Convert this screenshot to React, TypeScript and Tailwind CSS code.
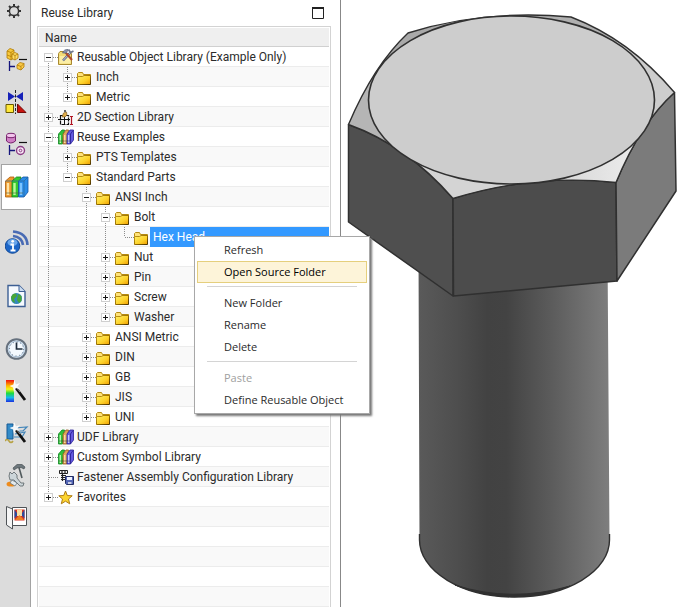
import React from "react";

type IconKind = "folder" | "tools" | "section" | "books" | "fastener" | "star";

type Row = {
  label: string;
  icon: IconKind;
  // One flag per ancestor column: whether its guide line continues through this row.
  guides: boolean[];
  toggle: "plus" | "minus" | "none";
  last?: boolean;
  first?: boolean;
  selected?: boolean;
};

const rows: Row[] = [
  { label: "Reusable Object Library (Example Only)", icon: "tools", guides: [], toggle: "minus", first: true },
  { label: "Inch", icon: "folder", guides: [true], toggle: "plus" },
  { label: "Metric", icon: "folder", guides: [true], toggle: "plus", last: true },
  { label: "2D Section Library", icon: "section", guides: [], toggle: "plus" },
  { label: "Reuse Examples", icon: "books", guides: [], toggle: "minus" },
  { label: "PTS Templates", icon: "folder", guides: [true], toggle: "plus" },
  { label: "Standard Parts", icon: "folder", guides: [true], toggle: "minus", last: true },
  { label: "ANSI Inch", icon: "folder", guides: [true, false], toggle: "minus" },
  { label: "Bolt", icon: "folder", guides: [true, false, true], toggle: "minus" },
  { label: "Hex Head", icon: "folder", guides: [true, false, true, true], toggle: "none", last: true, selected: true },
  { label: "Nut", icon: "folder", guides: [true, false, true], toggle: "plus" },
  { label: "Pin", icon: "folder", guides: [true, false, true], toggle: "plus" },
  { label: "Screw", icon: "folder", guides: [true, false, true], toggle: "plus" },
  { label: "Washer", icon: "folder", guides: [true, false, true], toggle: "plus", last: true },
  { label: "ANSI Metric", icon: "folder", guides: [true, false], toggle: "plus" },
  { label: "DIN", icon: "folder", guides: [true, false], toggle: "plus" },
  { label: "GB", icon: "folder", guides: [true, false], toggle: "plus" },
  { label: "JIS", icon: "folder", guides: [true, false], toggle: "plus" },
  { label: "UNI", icon: "folder", guides: [true, false], toggle: "plus", last: true },
  { label: "UDF Library", icon: "books", guides: [], toggle: "plus" },
  { label: "Custom Symbol Library", icon: "books", guides: [], toggle: "plus" },
  { label: "Fastener Assembly Configuration Library", icon: "fastener", guides: [], toggle: "none" },
  { label: "Favorites", icon: "star", guides: [], toggle: "plus", last: true },
];

function Guide({ on }: { on: boolean }) {
  return (
    <svg width="19" height="20" className="shrink-0" aria-hidden="true">
      {on && <path d="M9.5 0V20" stroke="#8c8c8c" strokeDasharray="1 1" />}
    </svg>
  );
}

function Toggle({ row }: { row: Row }) {
  const art = (
    <svg width="19" height="20" className="block" aria-hidden="true">
      {!row.first && <path d="M9.5 0V10" stroke="#8c8c8c" strokeDasharray="1 1" />}
      {!row.last && <path d="M9.5 10V20" stroke="#8c8c8c" strokeDasharray="1 1" />}
      <path d="M10 10.5H19" stroke="#8c8c8c" strokeDasharray="1 1" />
      {row.toggle !== "none" && (
        <>
          <rect x="5.5" y="6.5" width="8" height="8" fill="#fff" stroke="#cfcfcf" />
          <path d="M7 10.5H12" stroke="#1a1a1a" />
          {row.toggle === "plus" && <path d="M9.5 8V13" stroke="#1a1a1a" />}
        </>
      )}
    </svg>
  );
  if (row.toggle === "none") return <span className="shrink-0">{art}</span>;
  return (
    <button
      type="button"
      className="shrink-0"
      aria-label={(row.toggle === "plus" ? "Expand " : "Collapse ") + row.label}
    >
      {art}
    </button>
  );
}

function RowIcon({ kind }: { kind: IconKind }) {
  return (
    <svg width="16" height="20" viewBox="0 0 16 20" className="shrink-0" aria-hidden="true">
      {kind === "folder" && (
        <>
          <path d="M.5 16.5V6.5L1.5 5.5H5.5L6.5 7.5H13.500V16.500Z" fill="#ffe27a" stroke="#b58a10" />
          <path d="M.5 17.500V9.500H5.500L7 8.500H13.500V17.500Z" fill="url(#folderFace)" stroke="url(#folderEdge)" />
        </>
      )}
      {kind === "tools" && (
        <>
          <path d="M.5 17.500V6.500L2 4.500H6L7 6.500H13.500V17.500Z" fill="#f3dc78" stroke="#a98a30" />
          <path d="M1.500 16.500V9H12.500V16.500Z" fill="#fbeea6" />
          <path d="M5 13.500L12 6" stroke="#5c6480" strokeWidth="2.400" />
          <path d="M5 13.500L12 6" stroke="#c3cae0" />
          <path d="M10.500 2.500L12.500 5.500L15.500 4" stroke="#70788c" strokeWidth="1.800" fill="none" />
          <path d="M8 6L14 13" stroke="#b0492c" strokeWidth="2" />
          <path d="M4.500 6Q6 2 10 2.500L8.500 6Z" fill="#8a93ad" stroke="#4d566f" strokeWidth=".6" />
        </>
      )}
      {kind === "section" && (
        <>
          <path d="M2.500 8.500V17.500H10.500V8.500Z" fill="none" stroke="#111" strokeWidth="1.200" strokeDasharray="4 1" />
          <path d="M0 12.500H12M6.500 9V18" fill="none" stroke="#111" />
          <path d="M4 10L5.500 6L8.500 5L9 8L7 10Z" fill="#e0ad4a" stroke="#765016" strokeWidth=".6" />
          <circle cx="7" cy="4" r="1" fill="#333" />
          <path d="M12 9.500H15M12 17.500H15M13.500 9V18" stroke="#b01422" strokeWidth="1.200" />
        </>
      )}
      {kind === "books" && (
        <>
          <path d="M.5 7L4 3H6.500L4.500 17H.5Z" fill="#2fc23a" stroke="#0c8420" strokeWidth=".8" />
          <path d="M5 7L8 3H10.500L9 17H5Z" fill="#e0a55c" stroke="#95581c" strokeWidth=".8" />
          <path d="M9 7L12 3H15.500V13L12.500 17H9Z" fill="#6459e0" stroke="#2a2296" strokeWidth=".8" />
          <path d="M12.500 17V7L15 3.500" fill="none" stroke="#241d8c" strokeWidth=".8" />
          <path d="M2.300 8V16" stroke="#b4f8ae" strokeWidth="1.400" />
          <path d="M6.700 8V16" stroke="#ffe0ab" strokeWidth="1.200" />
          <path d="M10.600 8V16" stroke="#c6c2ff" strokeWidth="1.400" />
          <path d="M1 14H12" stroke="#35402c" strokeWidth=".5" />
        </>
      )}
      {kind === "fastener" && (
        <>
          <path d="M1.500 3.500H9.500V6.500H1.500Z" fill="#eee" stroke="#1f1f1f" />
          <path d="M4 3V6M7 3V6M3 8.500H8M3 10.500H8M3 12.500H7M4.500 7V14" stroke="#222" strokeWidth="1.200" />
          <path d="M7.500 9.500H15.500V17.500H8.500L7.500 16.500Z" fill="#5265b4" stroke="#222c62" />
          <path d="M9 10H14V13H9Z" fill="#eef2ff" />
          <path d="M10 15H13.500V17H10Z" fill="#c8cde2" />
        </>
      )}
      {kind === "star" && (
        <path
          d="M7.500 4L9.300 8.500L14.200 8.800L10.500 12L11.700 16.800L7.500 14.200L3.300 16.800L4.500 12L.8 8.800L5.700 8.500Z"
          fill="#fcd42f"
          stroke="#b07d14"
        />
      )}
    </svg>
  );
}

function TreeRow({ row, odd }: { row: Row; odd: boolean }) {
  return (
    <li
      role="treeitem"
      aria-selected={!!row.selected}
      aria-level={row.guides.length + 1}
      className={
        "flex h-5 shrink-0 shadow-[inset_0_-1px_0_#ececec] " + (odd ? "bg-[#f9f9f9]" : "bg-white")
      }
    >
      {row.guides.map((on, i) => (
        <Guide key={i} on={on} />
      ))}
      <Toggle row={row} />
      <RowIcon kind={row.icon} />
      <span
        className={
          "flex-1 pl-[3px] leading-5 whitespace-nowrap " + (row.selected ? "bg-[#3399ff] text-white" : "")
        }
      >
        {row.label}
      </span>
    </li>
  );
}

function SideButton({ label, children }: { label: string; children: React.ReactNode }) {
  return (
    <button type="button" aria-label={label} className="flex h-[42px] w-[30px] items-center justify-end pt-0.5 pr-px">
      <svg width="24" height="26" viewBox="0 0 24 26" aria-hidden="true">
        {children}
      </svg>
    </button>
  );
}

function Wand() {
  return (
    <>
      <path d="M11 9L20 21" stroke="#111" strokeWidth="2.800" />
      <path d="M11.500 8.500L15 13" stroke="#888" strokeWidth="1" />
      <path d="M9.500 1L10.800 5.500L15 4L12.500 7.500L15 10L10.800 9L9 13L8 8.500L4.500 7L8.300 5.500Z" fill="#fff" opacity=".9" />
    </>
  );
}

function Sidebar() {
  return (
    <nav aria-label="Resource bar" className="flex w-[31px] shrink-0 flex-col border-r border-[#a3a3a3] bg-[#dcdcdc]">
      <button type="button" aria-label="Settings" className="flex h-[38px] items-start pt-[3px] pl-1.5">
        <svg width="16" height="16" viewBox="0 0 16 16" aria-hidden="true">
          <circle cx="8" cy="8" r="4.600" fill="none" stroke="#333" strokeWidth="1.500" />
          <path d="M8 1V3M8 13V15M1 8H3M13 8H15M3 3L4.600 4.600M11.400 11.400L13 13M13 3L11.400 4.600M3 13L4.600 11.400" stroke="#333" strokeWidth="2" />
        </svg>
      </button>
      <SideButton label="Assembly Navigator">
        <path d="M2 4L5 1.500L9 3V11L6 13L2 11Z" fill="#f8c93c" stroke="#b07c08" strokeWidth=".8" />
        <path d="M2 4L6 5.500L9 3M6 5.500V13M2 8L6 9.500L9 7" fill="none" stroke="#b07c08" strokeWidth=".8" />
        <path d="M7 7L10 5.500L13 7V11L10 13L7 11.500Z" fill="#ffdc66" stroke="#b07c08" strokeWidth=".8" />
        <path d="M7 7L10 8.500L13 7M10 8.500V13" fill="none" stroke="#b07c08" strokeWidth=".8" />
        <path d="M14 12.500H22" stroke="#111" strokeWidth="1.200" />
        <path d="M4.500 14V24M4.500 19.500H10" stroke="#15157c" strokeWidth="1.300" />
        <path d="M12 18L15 15.500L19 16.500V20L16 23L12 21.500Z" fill="#fbca48" stroke="#b07c08" strokeWidth=".8" />
        <path d="M12 18L16 19.500L19 16.500M16 19.500V23" fill="none" stroke="#b07c08" strokeWidth=".8" />
      </SideButton>
      <SideButton label="Constraint Navigator">
        <path d="M3 3L10 7.500L3 12ZM18 3L11 7.500L18 12Z" fill="#1722b8" />
        <path d="M10.500 1V25" stroke="#222" strokeDasharray="3 1.500" />
        <path d="M1 15.500H8.500V23.500H1Z" fill="#ffe83a" stroke="#6b5a00" />
        <path d="M12.500 15L21 23.500H12.500Z" fill="#c9130e" stroke="#6f0b08" />
      </SideButton>
      <SideButton label="Part Navigator">
        <path d="M1.500 4.500V10Q5.500 14 10.500 10V4.500Z" fill="#cf7fc5" stroke="#76226c" />
        <ellipse cx="6" cy="4.500" rx="4.500" ry="2.200" fill="#f2c4ec" stroke="#76226c" />
        <path d="M14 11.500H22" stroke="#111" strokeWidth="1.200" />
        <path d="M4.500 14V24M4.500 19.500H10" stroke="#15157c" strokeWidth="1.300" />
        <circle cx="15.500" cy="19.500" r="4" fill="#f5e4f3" stroke="#8c3d85" strokeWidth="1.400" />
        <circle cx="15.500" cy="19.500" r="1.300" fill="none" stroke="#8c3d85" />
      </SideButton>
      <button
        type="button"
        aria-label="Reuse Library"
        aria-pressed="true"
        className="-mr-px ml-px flex h-[46px] items-center border border-r-0 border-[#a3a3a3] bg-white pl-[3px]"
      >
        <svg width="24" height="24" viewBox="0 0 24 24" aria-hidden="true">
          <path d="M.5 6L5 2H9L7 22H.5Z" fill="#ee9a2d" stroke="#ac5d0c" strokeWidth=".8" />
          <path d="M7 6L11.500 2H16L13 22H7Z" fill="#37c92e" stroke="#18821a" strokeWidth=".8" />
          <path d="M13.500 6L18 2H23V17L19 22H13.500Z" fill="#2b8de8" stroke="#1254a5" strokeWidth=".8" />
          <path d="M19 22V6L23 2M.5 6H19" fill="none" stroke="#2b6795" strokeWidth=".7" />
          <path d="M3 8V20" stroke="#ffe2a4" strokeWidth="2.400" />
          <path d="M9.500 8V20" stroke="#b8fb9a" strokeWidth="2.400" />
          <path d="M16 8V20" stroke="#7cc4ff" strokeWidth="2.400" />
          <path d="M1 18H18" stroke="#4f5d3a" strokeWidth=".6" />
        </svg>
      </button>
      <div className="mt-2.5 flex flex-col gap-3">
        <SideButton label="HD3D Tools">
          <path d="M8 7Q17 8 18 16M8 2.500Q22 4 22.500 16" fill="none" stroke="#496bb4" strokeWidth="2.600" />
          <circle cx="7.500" cy="17" r="7.300" fill="#1c66c8" stroke="#164b96" />
          <ellipse cx="7.500" cy="13.500" rx="5" ry="3.500" fill="#68a5ea" />
          <path d="M5.500 15.500H8V21M5.500 21.500H10.500" stroke="#fff" strokeWidth="1.800" fill="none" />
          <circle cx="7.700" cy="12.300" r="1.400" fill="#fff" />
        </SideButton>
        <SideButton label="Internet Explorer">
          <path d="M3 2.500H14L20 8.500V23.500H3Z" fill="#f6faff" stroke="#3d5f94" strokeWidth="1.400" />
          <path d="M14 2.500V8.500H20" fill="#cbdcf0" stroke="#3d5f94" />
          <circle cx="11.500" cy="15.500" r="5.500" fill="#3487bd" />
          <path d="M8 11L11 10.500L12 13L9 16L10 20L7 18L6 14ZM13 11L16.500 13L16.500 18L14 20L12 17Z" fill="#46a637" />
        </SideButton>
        <SideButton label="History">
          <circle cx="11.500" cy="12" r="9.800" fill="#dcebf8" stroke="#66717e" strokeWidth="2" />
          <circle cx="11.500" cy="12" r="7.800" fill="#f3f9ff" stroke="#9fb9d2" strokeWidth=".8" />
          <path d="M11.500 5.500V12H17.500" stroke="#1f2d3d" strokeWidth="1.700" fill="none" />
          <circle cx="11.500" cy="12" r="7" fill="none" stroke="#44566b" strokeDasharray=".8 2.865" />
        </SideButton>
      </div>
      <SideButton label="Process Studio">
        <path d="M1 1H9V23H1Z" fill="url(#spectrum)" />
        <Wand />
      </SideButton>
      <SideButton label="Manufacturing Wizards">
        <path d="M2 3H8V18H2Z" fill="#338bc8" stroke="#175b95" />
        <path d="M9 7L22 6L18 10H11M10 13L20 11L17 16H9" fill="none" stroke="#4285b9" strokeWidth="1.200" />
        <path d="M0 20Q2 17 4 20T8 20" fill="none" stroke="#b7a244" strokeWidth="1.600" />
        <Wand />
      </SideButton>
      <SideButton label="Roles">
        <path d="M8 5L12 1.500H17L20 4L19 6L16 4.500L12 5L9 7Z" fill="#6d777c" stroke="#394246" strokeWidth=".6" />
        <path d="M14 4.500L17 15" stroke="#515a5d" strokeWidth="1.600" />
        <path d="M5 9L7 11L9 9L12 12L12 15L16 20H19L18 23H15L9 17H5L4 13Z" fill="#ccd5d9" stroke="#596266" strokeWidth=".8" />
        <ellipse cx="6" cy="21" rx="4.500" ry="2.600" fill="#ee8b1c" />
        <path d="M7 17L12 20L10 23L5 20Z" fill="#e4eaee" stroke="#62727d" strokeWidth=".7" />
      </SideButton>
      <SideButton label="System Scenes">
        <path d="M1.500 1.500L7.500 4V24L1.500 20Z" fill="#f5f5f5" stroke="#4f5357" />
        <path d="M7.500 2.500H21.500V20.500H7.500Z" fill="#fff" stroke="#4f5357" />
        <path d="M9.500 4.500H19.500V15.500H9.500Z" fill="#d63422" />
        <path d="M9.500 4.500L14.500 12L19.500 4.500V13.500L14.500 8L9.500 13.500Z" fill="#294b9f" />
        <path d="M12 4.500H17V11H12Z" fill="#f9dca4" />
        <path d="M10 15L14.500 10L19 15Z" fill="#ec8224" />
      </SideButton>
    </nav>
  );
}

function LibraryPanel() {
  return (
    <section aria-label="Reuse Library" className="flex w-[310px] shrink-0 flex-col border-r border-[#888] pr-[9px] pl-1.5">
      <header className="flex h-[26px] shrink-0 items-center justify-between pr-[7px] pl-1">
        <h1>Reuse Library</h1>
        <button type="button" aria-label="Maximize panel">
          <svg width="12" height="12" className="block" aria-hidden="true">
            <path d="M.5 1V11.500H11.500V1" fill="none" stroke="#222" />
            <path d="M0 1H12" stroke="#222" strokeWidth="2" />
          </svg>
        </button>
      </header>
      <div className="flex min-h-0 flex-1 flex-col border border-b-0 border-[#d3d3d3] p-px pb-0">
        <div className="h-[19px] shrink-0 border-b border-[#d0d0d0] bg-[#efefef] pl-1.5 leading-5">Name</div>
        <ul role="tree" aria-label="Libraries" className="flex flex-col">
          {rows.map((row, i) => (
            <TreeRow key={row.label} row={row} odd={i % 2 === 1} />
          ))}
        </ul>
        <div className="flex-1 bg-[repeating-linear-gradient(to_bottom,#f9f9f9_0_19px,#ececec_19px_20px,#fff_20px_39px,#ececec_39px_40px)]" />
      </div>
    </section>
  );
}

function MenuItem({ label, active, disabled }: { label: string; active?: boolean; disabled?: boolean }) {
  return (
    <button
      type="button"
      role="menuitem"
      disabled={disabled}
      className={
        "flex h-[22px] items-center border pl-[26px] text-left whitespace-nowrap " +
        (active ? "border-[#e5cf7d] bg-[#fdf4d9] text-black" : disabled ? "border-transparent text-[#a0a0a0]" : "border-transparent")
      }
    >
      {label}
    </button>
  );
}

function MenuRule() {
  return <hr className="mx-2.5 mt-[3px] mb-[5px] border-t border-[#d4d4d4]" />;
}

function ContextMenu() {
  return (
    <div
      role="menu"
      className="absolute top-[236px] left-[194px] flex w-[176px] flex-col border border-[#a8a8a8] bg-white p-0.5 font-['Open_Sans','Noto_Sans',sans-serif] text-[11px] shadow-[2px_2px_2px_#777]"
    >
      <MenuItem label="Refresh" />
      <MenuItem label="Open Source Folder" active />
      <MenuRule />
      <MenuItem label="New Folder" />
      <MenuItem label="Rename" />
      <MenuItem label="Delete" />
      <MenuRule />
      <MenuItem label="Paste" disabled />
      <MenuItem label="Define Reusable Object" />
    </div>
  );
}

function BoltView() {
  const top =
    "M348.500 124.500Q373.700 65.200 408 33Q484.500 9 571 17Q629.300 39.300 674.500 92.500Q640.800 122.500 616 182.500Q533.500 173.500 453 198.500Q407 145.500 348.500 124.500Z";
  return (
    <svg viewBox="341 0 344 607" preserveAspectRatio="xMinYMin meet" className="block h-full w-full" role="img" aria-label="Hex head bolt">
      <defs>
        <linearGradient id="folderFace" x1="0" y1="0" x2="1" y2="1">
          <stop offset="0" stopColor="#fff36a" />
          <stop offset=".6" stopColor="#fdd028" />
          <stop offset="1" stopColor="#ee9c00" />
        </linearGradient>
        <linearGradient id="folderEdge" x1="0" y1="0" x2="1" y2="1">
          <stop offset="0" stopColor="#c39a1c" />
          <stop offset=".5" stopColor="#9a7000" />
          <stop offset="1" stopColor="#4a3300" />
        </linearGradient>
        <linearGradient id="spectrum" x1="0" y1="0" x2="0" y2="1">
          <stop offset="0" stopColor="#f21111" />
          <stop offset=".25" stopColor="#ffb000" />
          <stop offset=".42" stopColor="#f3f51c" />
          <stop offset=".6" stopColor="#1ddb3b" />
          <stop offset=".8" stopColor="#15b7ee" />
          <stop offset="1" stopColor="#1b2fe0" />
        </linearGradient>
        <linearGradient id="shank" x1="0" y1="0" x2="1" y2="0">
          <stop offset="0" stopColor="#5a5a5a" />
          <stop offset=".2" stopColor="#4e4e4e" />
          <stop offset=".36" stopColor="#424242" />
          <stop offset=".46" stopColor="#434343" />
          <stop offset=".7" stopColor="#5c5c5c" />
          <stop offset="1" stopColor="#7e7e7e" />
        </linearGradient>
        <linearGradient id="bright" x1="0" y1="0" x2="1" y2="0">
          <stop offset="0" stopColor="#cacaca" />
          <stop offset="1" stopColor="#ededed" />
        </linearGradient>
        <clipPath id="topClip">
          <path d={top} />
        </clipPath>
      </defs>
      <path d="M418.500 250L419.500 540A95 57 0 0 0 609.500 540L607.500 250Z" fill="url(#shank)" />
      <path d="M419.500 534V540A95 57 0 0 0 609.500 540V534" fill="none" stroke="#303030" strokeWidth="1.400" />
      <path d="M455 585Q511 608 570 586Q511 603 455 585Z" fill="#303030" stroke="#303030" />
      <g stroke="#303030" strokeWidth="1.500" strokeLinejoin="round">
        <path d="M348.500 124.500Q407 145.500 453 198.500V296L348.500 222Z" fill="#4f4f4f" />
        <path d="M453 198.500Q533.500 173.500 616 182.500L617 281L453.500 296Z" fill="#4c4c4c" />
        <path d="M616 182.500Q640.800 122.500 674.500 92.500L676 191L617 281Z" fill="#7b7b7b" />
      </g>
      <g clipPath="url(#topClip)">
        <path d="M511 100L340 130V0H511Z" fill="#a9a9a9" />
        <path d="M511 100L340 70V150L405 160Z" fill="#b5b5b5" />
        <path d="M511 100V0H640L630 50Z" fill="#b0b0b0" />
        <path d="M511 100L620 40L690 80L640 140Z" fill="#cdcdcd" />
        <path d="M511 100L640 130L620 200L530 190Z" fill="url(#bright)" />
        <path d="M511 100L400 150L450 210L530 185Z" fill="#d4d4d4" />
      </g>
      <path d={top} fill="none" stroke="#303030" strokeWidth="1.400" strokeLinejoin="round" />
      <ellipse cx="511.500" cy="100" rx="143" ry="84" fill="#cdcdcd" stroke="#303030" strokeWidth="1.600" />
    </svg>
  );
}

export default function App() {
  return (
    <div className="relative flex h-screen overflow-hidden bg-white font-[Roboto,'Noto_Sans',sans-serif] text-[12px] text-[#2b2b2b]">
      <Sidebar />
      <LibraryPanel />
      <main className="min-w-0 flex-1">
        <BoltView />
      </main>
      <ContextMenu />
    </div>
  );
}
